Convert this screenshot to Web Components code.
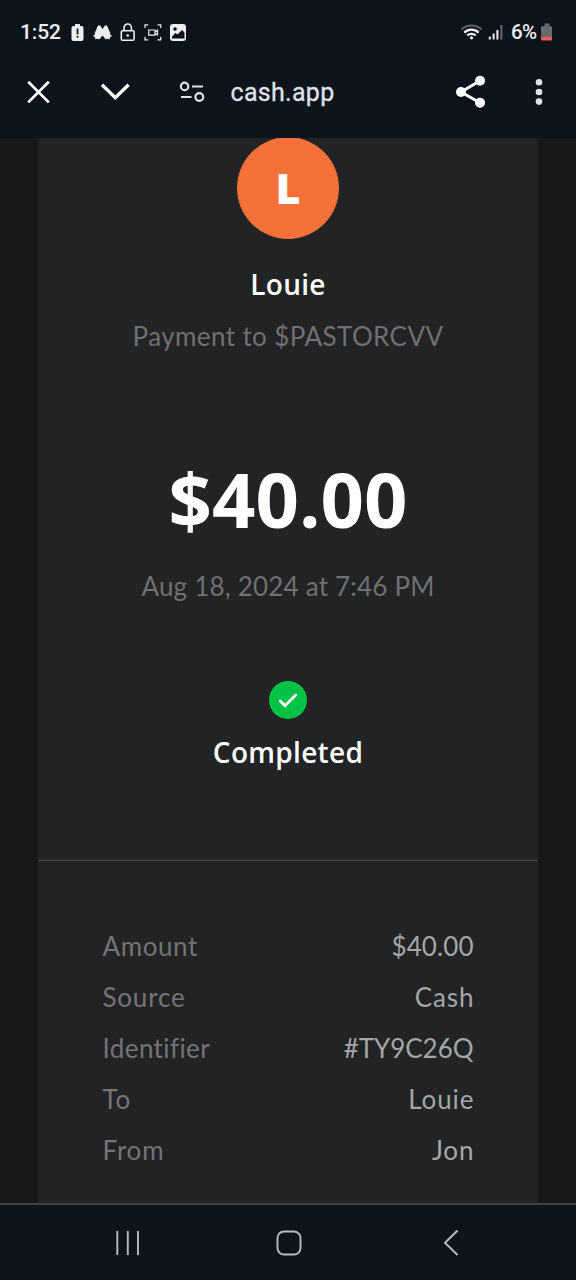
<!DOCTYPE html>
<html lang="en">
<head>
<meta charset="utf-8">
<meta name="viewport" content="width=device-width">
<title>Cash App receipt</title>
<style>
html,body{margin:0;background:#0c131a}
body{font-family:Lato,"Liberation Sans",sans-serif;color:#fff}
</style>
</head>
<body>
<receipt-screen></receipt-screen>
<script>
const define = (name, html) => customElements.define(name, class extends HTMLElement {
  constructor() {
    super();
    const t = document.createElement('template');
    t.innerHTML = html;
    this.attachShadow({ mode: 'open' }).append(t.content.cloneNode(true));
  }
});

define('status-bar', `
<style>
:host{display:flex;align-items:center;height:64px;box-sizing:border-box;padding:0 23px 0 20px;font:500 21px/64px Roboto,sans-serif;color:#eceef0}
svg{display:block;flex:none}
.time{width:46px;letter-spacing:-.1px}
.pct{width:30px;letter-spacing:-.7px;font-weight:500;font-size:20.500px}
.grow{flex:1}
</style>
<span class="time">1:52</span>
<svg width="122" height="24" viewBox="66 20 122 24" fill="#eceef0">
  <path d="M75 26v-2h5v2h1.500a2 2 0 0 1 2 2v11a2 2 0 0 1-2 2h-8a2 2 0 0 1-2-2V28a2 2 0 0 1 2-2z"/>
  <path d="M76.700 28.500h1.700v6h-1.700zM76.700 36h1.700v1.800h-1.700z" fill="#0c131a"/>
  <path d="M98.500 25l2.300 1.200 1.700 3 1.700-3 2.300-1.200 1.500 2.500 1 3 1.300 2-.5 1 2.200 3-2.200.5.200 2.300-3-.6-1.200.9-2-2.600-1.300-1.500-1.300 1.500-2 2.600-1.200-.9-3 .6.200-2.300-2.200-.5 2.200-3-.5-1 1.300-2 1-3z"/>
  <g fill="none" stroke="#eceef0">
    <rect x="121.300" y="30.800" width="12.800" height="9.400" rx="1.300" stroke-width="1.600"/>
    <path d="M124 30.500v-2.800a3.700 3.700 0 0 1 7.400 0v2.800" stroke-width="1.600"/>
    <path d="M145 28v-3.200h3.200M157.500 24.800h3.200V28M160.700 36.700v3.200h-3.200M148.200 39.900H145v-3.200M148.700 30h6.300v5.200h-6.300zM155.200 32l2.300-1.700v4.600l-2.300-1.700" stroke-width="1.200"/>
  </g>
  <circle cx="127.700" cy="35.500" r="1.300"/>
  <rect x="170" y="24" width="16" height="17" rx="3"/>
  <circle cx="175" cy="29" r="1.800" fill="#0c131a"/>
  <path d="M172 38.500v-2l3.500-3.500 2 1.500 4.500-4.500 2.500 2.500v6z" fill="#0c131a"/>
</svg>
<span class="grow"></span>
<svg width="52" height="24" viewBox="459 20 52 24" fill="none" stroke="#eceef0" stroke-width="2.200">
  <path d="M461.500 29.500a14.500 14.500 0 0 1 20 0" stroke="#5c6267"/>
  <path d="M464.300 32.600a10.300 10.300 0 0 1 14.400 0M467.200 35.500a6.300 6.300 0 0 1 8.600 0"/>
  <circle cx="471.500" cy="37.800" r="1.600" fill="#eceef0" stroke="none"/>
  <path d="M489.800 36.500v3M493.600 33.500v6M497.400 30v9.500" stroke-width="2"/>
  <path d="M501.400 25v14.500" stroke="#5c6267"/>
</svg>
<span class="pct">6%</span>
<svg width="12" height="24" viewBox="541 20 12 24" fill="#69686c">
  <path d="M544.500 26v-2.500h5V26h1a1.500 1.500 0 0 1 1.500 1.500V37h-11v-9.500a1.500 1.500 0 0 1 1.500-1.500z"/>
  <path d="M541 37h11v2a1.500 1.500 0 0 1-1.500 1.500h-8A1.500 1.500 0 0 1 541 39z" fill="#ee5b55"/>
</svg>`);

define('browser-bar', `
<style>
:host{display:flex;align-items:center;height:56px;font:400 25px/56px Roboto,sans-serif;color:#dfe2ea}
svg{display:block;flex:none}
.url{flex:1;padding:2px 0 0 20.500px;letter-spacing:.3px;-webkit-text-stroke:.3px}
</style>
<svg width="210" height="56" viewBox="0 64 210 56" fill="none" stroke="#fff">
  <path d="M28.200 81.800l20.600 20.600M48.800 81.800L28.200 102.400" stroke-width="2.700"/>
  <path d="M102 84.700L115.300 97.800l13.300-13.100" stroke-width="3.300"/>
  <g stroke="#dfe2ea" stroke-width="2.200">
    <circle cx="184.600" cy="86.400" r="3.700"/><circle cx="199.300" cy="97" r="3.900"/>
    <path d="M192 86.500h11M181 97h10.500"/>
  </g>
</svg>
<span class="url">cash.app</span>
<svg width="126" height="56" viewBox="450 64 126 56" fill="#fff">
  <path d="M480 80.700L461 92l19 10.800" fill="none" stroke="#fff" stroke-width="3"/>
  <circle cx="480" cy="80.700" r="5"/><circle cx="461" cy="92" r="5"/><circle cx="480" cy="102.800" r="5"/>
  <g fill="#dfe2ea"><circle cx="539" cy="82.200" r="3.300"/><circle cx="539" cy="92" r="3.300"/><circle cx="539" cy="101.600" r="3.300"/></g>
</svg>`);

define('user-avatar', `
<style>
:host{display:flex;align-items:center;justify-content:center;width:102px;height:102px;border-radius:50%;background:#f67139;font:800 43px/50px "Open Sans",sans-serif;color:#fff}
</style><slot></slot>`);

define('payment-summary', `
<style>
:host{display:flex;flex-direction:column;align-items:center;height:723px;box-sizing:border-box;border-bottom:1px solid #47484a;white-space:nowrap}
user-avatar{margin-top:-1px}
.name{margin-top:28px;font:600 28px/34px "Open Sans",sans-serif;letter-spacing:.3px}
.for{margin-top:19px;font:400 26px/32px Lato,sans-serif;color:#6f7072;letter-spacing:.4px}
.amount{margin-top:102px;font:700 76px/90px "Open Sans",sans-serif}
.date{margin-top:26px;font:400 26px/32px Lato,sans-serif;color:#6f7072;letter-spacing:.2px}
svg{display:block;margin-top:79px}
.state{margin-top:16px;font:600 28px/34px "Open Sans",sans-serif;letter-spacing:.3px}
</style>
<user-avatar>L</user-avatar>
<div class="name"><slot name="name"></slot></div>
<div class="for"><slot name="for"></slot></div>
<div class="amount"><slot name="amount"></slot></div>
<div class="date"><slot name="date"></slot></div>
<svg width="38" height="38" viewBox="0 0 38 38"><circle cx="19" cy="19" r="19" fill="#00c244"/><path d="M11.300 20l4.700 4.700L26.700 14" fill="none" stroke="#fff" stroke-width="2.800" stroke-linecap="round"/></svg>
<div class="state"><slot name="state"></slot></div>`);

define('detail-row', `
<style>
:host{display:flex;justify-content:space-between;height:51.200px;font:400 26px/51.200px Lato,sans-serif;color:#a5a6a8}
.label{color:#737476;letter-spacing:var(--label-ls,.8px)}
.value{letter-spacing:var(--value-ls,.9px);margin-right:calc(-1*var(--value-ls,.9px))}
</style>
<span class="label"><slot name="label"></slot></span><span class="value"><slot></slot></span>`);

define('nav-bar', `
<style>
:host{display:block;height:77px;box-sizing:border-box;border-top:2px solid #3c4347;background:#0c131a}
svg{display:block}
</style>
<svg width="576" height="75" viewBox="0 1205 576 75" fill="none" stroke="#b9bdc3" stroke-width="1.900">
  <path d="M117.300 1231v24M127.800 1231v24M138 1231v24"/>
  <rect x="277.500" y="1231.500" width="23" height="23" rx="6.500"/>
  <path d="M457.500 1230.500L445 1242.800l12.500 12.200"/>
</svg>`);

define('receipt-screen', `
<style>
:host{display:flex;flex-direction:column;width:576px;height:1280px;overflow:hidden;background:#0c131a}
header{height:138px;flex:none}
main{flex:1;min-height:0;overflow:hidden;background:#171819;padding:0 38px}
article{height:100%;background:#222325;overflow:hidden}
.rows{padding:59.500px 64.500px 0}
.tight{--label-ls:.6px;--value-ls:.1px}
.id{--label-ls:.4px;--value-ls:-.05px}
</style>
<header><status-bar></status-bar><browser-bar></browser-bar></header>
<main><article>
  <payment-summary>
    <span slot="name">Louie</span><span slot="for">Payment to $PASTORCVV</span><span slot="amount">$40.00</span>
    <span slot="date">Aug 18, 2024 at 7:46 PM</span><span slot="state">Completed</span>
  </payment-summary>
  <div class="rows">
    <detail-row class="tight"><span slot="label">Amount</span>$40.00</detail-row>
    <detail-row><span slot="label">Source</span>Cash</detail-row>
    <detail-row class="id"><span slot="label">Identifier</span>#TY9C26Q</detail-row>
    <detail-row><span slot="label">To</span>Louie</detail-row>
    <detail-row><span slot="label">From</span>Jon</detail-row>
  </div>
</article></main>
<nav-bar></nav-bar>`);
</script>
</body>
</html>
